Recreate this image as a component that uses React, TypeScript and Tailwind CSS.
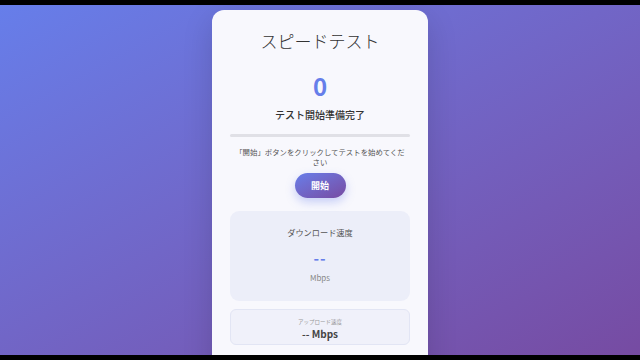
export default function App() {
  return (
    <div className="h-screen w-full bg-black py-[5px]" style={{ fontFamily: '"Noto Sans CJK JP", "Noto Sans", sans-serif' }}>
      {/* 背景 */}
      <div className="flex h-full w-full justify-center overflow-hidden bg-gradient-to-br from-[#667eea] to-[#764ba2] pt-[5px]">
        {/* カード */}
        <div className="h-[420px] w-[216px] shrink-0 rounded-[12px] bg-[#f8f8fd] px-[18px] pt-[19px] text-center shadow-[0_10px_30px_rgba(0,0,0,0.15)]">
          <h1 className="text-[17px] font-light leading-[24px] text-[#333]">スピードテスト</h1>

          <div className="mt-[18px] text-[24px] font-bold leading-[30px] text-[#667eea]">0</div>
          <div className="mt-[7px] text-[10px] font-medium leading-[14px] text-[#333]">テスト開始準備完了</div>

          {/* プログレス */}
          <div className="mt-[12px] h-[3px] w-full rounded-full bg-[#e0e0e6]" />

          <p className="mt-[10px] px-[2px] text-[7.4px] leading-[10px] text-[#555]">
            「開始」ボタンをクリックしてテストを始めてください
          </p>

          <div className="mt-[6px] flex justify-center">
            <button className="h-[25px] w-[51px] rounded-full bg-gradient-to-br from-[#667eea] to-[#764ba2] text-[9px] font-bold text-white shadow-[0_4px_10px_rgba(102,126,234,0.35)]">
              開始
            </button>
          </div>

          {/* ダウンロード */}
          <div className="mt-[13px] h-[90px] rounded-[9px] bg-[#eceef9] pt-[15px]">
            <div className="text-[8.2px] leading-[12px] text-[#555]">ダウンロード速度</div>
            <div className="mt-[10px] text-[15px] font-bold leading-[20px] tracking-[1px] text-[#667eea]">--</div>
            <div className="mt-[4px] text-[8px] leading-[12px] text-[#888]">Mbps</div>
          </div>

          {/* アップロード */}
          <div className="mt-[8px] h-[36px] rounded-[6px] border border-[#e2e5f4] bg-[#f0f1fa] pt-[8px]">
            <div className="text-[5.5px] leading-[8px] text-[#999]">アップロード速度</div>
            <div className="mt-[1px] text-[10px] font-bold leading-[14px] text-[#444]">-- Mbps</div>
          </div>
        </div>
      </div>
    </div>
  );
}
